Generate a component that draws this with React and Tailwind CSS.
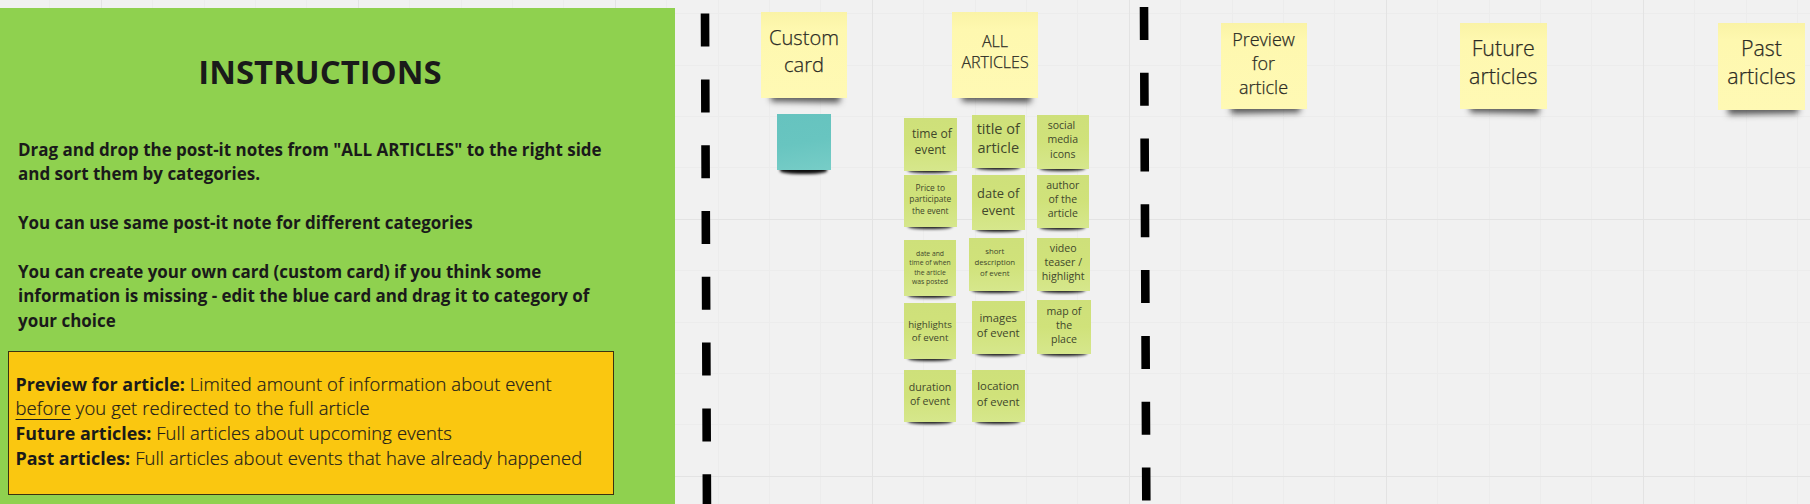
const NOTES = [
  { kind: "yellow", tilt: "right", box: "left-[761px] top-[12px] w-[86px] h-[86px]", type: "text-[20.1px] leading-[26.8px] pt-[13.3px]", lines: ["Custom", "card"] },
  { kind: "yellow", tilt: "right", box: "left-[952px] top-[12px] w-[86px] h-[86px]", type: "text-[16px] leading-[21.4px] pt-[18.7px]", lines: ["ALL", "ARTICLES"] },
  { kind: "yellow", tilt: "left", box: "left-[1220.5px] top-[22.5px] w-[86px] h-[86.5px]", type: "text-[18px] leading-[24px] pt-[4.2px]", lines: ["Preview", "for", "article"] },
  { kind: "yellow", tilt: "right", box: "left-[1460px] top-[22.5px] w-[86.5px] h-[86.5px]", type: "text-[21.4px] leading-[28px] pt-[11.4px]", lines: ["Future", "articles"] },
  { kind: "yellow", tilt: "left", box: "left-[1718px] top-[22.5px] w-[87px] h-[87px]", type: "text-[21.4px] leading-[28px] pt-[11.4px]", lines: ["Past", "articles"] },
  { kind: "teal", box: "left-[777px] top-[113.5px] w-[54px] h-[56px]", type: "", lines: [] },
  { kind: "green", box: "left-[904px] top-[117.5px] w-[52.5px] h-[53px]", type: "text-[12.1px] leading-[16.6px] pt-[8.2px]", lines: ["\u00a0time of", "event"] },
  { kind: "green", box: "left-[972px] top-[115px] w-[52.5px] h-[52.5px]", type: "text-[14.5px] leading-[19.4px] pt-[3.8px]", lines: ["title of", "article"] },
  { kind: "green", box: "left-[1036.5px] top-[114.5px] w-[52.5px] h-[54px]", type: "text-[10.5px] leading-[14.3px] pt-[3.6px]", lines: ["social\u00a0", "media", "icons"] },
  { kind: "green", box: "left-[904px] top-[175px] w-[52.5px] h-[52px]", type: "text-[8.4px] leading-[11.35px] pt-[7px]", lines: ["Price to", "participate", "the event"] },
  { kind: "green", box: "left-[972px] top-[174.5px] w-[52.5px] h-[55.5px]", type: "text-[12.9px] leading-[17.5px] pt-[10px]", lines: ["date of", "event"] },
  { kind: "green", box: "left-[1036.5px] top-[175px] w-[52.5px] h-[52.5px]", type: "text-[10.5px] leading-[14.2px] pt-[3px]", lines: ["author", "of the", "article"] },
  { kind: "green", box: "left-[904px] top-[239.5px] w-[52px] h-[56.5px]", type: "text-[6.8px] leading-[9.2px] pt-[9.6px]", lines: ["date and", "time of when", "the article", "was posted"] },
  { kind: "green", box: "left-[968.5px] top-[238px] w-[55.5px] h-[53px]", type: "text-[7.8px] leading-[10.6px] pt-[8.4px] pr-[3px]", lines: ["short", "description", "of event"] },
  { kind: "green", box: "left-[1037px] top-[238px] w-[52.5px] h-[53px]", type: "text-[10.6px] leading-[14.3px] pt-[2.8px]", lines: ["video", "teaser /", "highlight"] },
  { kind: "green", box: "left-[904px] top-[303px] w-[52px] h-[56px]", type: "text-[9.7px] leading-[13.3px] pt-[14.7px]", lines: ["highlights", "of event"] },
  { kind: "green", box: "left-[972px] top-[301px] w-[52.5px] h-[53px]", type: "text-[11.3px] leading-[15.4px] pt-[9px]", lines: ["images", "of event"] },
  { kind: "green", box: "left-[1037px] top-[300px] w-[54px] h-[54px]", type: "text-[10.6px] leading-[14.3px] pt-[3.8px]", lines: ["map of", "the", "place"] },
  { kind: "green", box: "left-[904px] top-[369.5px] w-[52px] h-[52.5px]", type: "text-[10.6px] leading-[14.3px] pt-[10.3px]", lines: ["duration", "of event"] },
  { kind: "green", box: "left-[972px] top-[370px] w-[52.5px] h-[52px]", type: "text-[11.3px] leading-[15.6px] pt-[8px]", lines: ["location", "of event"] },
];

const PAPER = {
  yellow: "bg-linear-to-b from-[#faf3a6] via-[#fef8af] via-20% to-[#fff9b4] text-[#2b2b24] font-light [-webkit-text-stroke:0.25px]",
  green: "bg-linear-to-b from-[#cee07a] via-[#d0e27a] via-50% to-[#d6e78c] text-[#41472c] font-normal",
  teal: "bg-linear-170 from-[#66c3bf] via-[#68c5c0] via-50% to-[#77cdc7]",
};

const SHADOW = {
  yellow: "left-[12%] right-[8%] -bottom-[4px] h-[10px] bg-black/65 blur-[3px]",
  green: "left-[7%] right-[8%] -bottom-[2.2px] h-[7px] bg-black/90 blur-[1.6px]",
  teal: "left-[6%] right-[8%] -bottom-[4px] h-[8px] bg-black/95 blur-[1.8px]",
};

const TILT = { left: "-rotate-1", right: "rotate-1" };

function Note({ kind, tilt, box, type, lines }) {
  return (
    <div className={`absolute ${box}`}>
      <div className={`absolute ${SHADOW[kind]} ${TILT[tilt] ?? "rounded-b-[40%]"}`} />
      <div className={`relative h-full text-center whitespace-nowrap ${PAPER[kind]} ${type}`}>
        {lines.map((line) => (
          <div key={line}>{line}</div>
        ))}
      </div>
    </div>
  );
}

const range = (start, step, end) => {
  const out = [];
  for (let v = start; v < end; v += step) out.push(v);
  return out;
};

function Board() {
  return (
    <svg className="absolute inset-0" width="1810" height="504" viewBox="0 0 1810 504">
      <g stroke="#ececec">
        {range(49.9, 51.4, 1810).map((x) => <path key={x} d={`M${Math.floor(x) + 0.5} 0V504`} />)}
        {range(13.7, 51.4, 504).map((y) => <path key={y} d={`M0 ${Math.floor(y) + 0.5}H1810`} />)}
      </g>
      <g stroke="#e3e3e3">
        {range(101.3, 257, 1810).map((x) => <path key={x} d={`M${Math.floor(x) + 0.5} 0V504`} />)}
        {range(219.3, 257, 504).map((y) => <path key={y} d={`M0 ${Math.floor(y) + 0.5}H1810`} />)}
      </g>
      <g stroke="#000" strokeWidth="8.6" strokeDasharray="33 32.8">
        <path d="M705 13.6L707 520" />
        <path d="M1144 6.9L1146.4 520" />
      </g>
    </svg>
  );
}

function Instructions() {
  return (
    <section className="absolute left-0 top-[8px] flex h-[496px] w-[675px] flex-col bg-[#8fd14f] text-[#1a1a1a]">
      <div className="ml-[18px] w-[604px]">
        <h1 className="pt-[41px] text-center text-[32.9px] leading-[46px] font-bold">INSTRUCTIONS</h1>
        <div className="mt-[43px] flex flex-col gap-[24.3px] text-[16.98px] leading-[24.4px] font-bold">
          <p>
            Drag and drop the post-it notes from "ALL ARTICLES" to the right side
            <br />
            and sort them by categories.
          </p>
          <p>You can use same post-it note for different categories</p>
          <p>
            You can create your own card (custom card) if you think some
            <br />
            information is missing - edit the blue card and drag it to category of
            <br />
            your choice
          </p>
        </div>
      </div>
      <div className="absolute top-[343px] left-[8px] h-[144px] w-[606px] border border-[#3b3210] bg-[#fac710] pt-[19.8px] pl-[6.5px] text-[18.4px] leading-[24.6px] font-light tracking-[0.13px] whitespace-nowrap [-webkit-text-stroke:0.2px]">
        <p>
          <b className="text-[17.9px] font-bold tracking-normal [-webkit-text-stroke:0px]">Preview for article:</b> Limited amount of information about event
        </p>
        <p>
          <span className="underline decoration-[1.4px] underline-offset-[4px]">before</span> you get redirected to the full article
        </p>
        <p>
          <b className="text-[17.9px] font-bold tracking-normal [-webkit-text-stroke:0px]">Future articles:</b> Full articles about upcoming events
        </p>
        <p>
          <b className="text-[17.9px] font-bold tracking-normal [-webkit-text-stroke:0px]">Past articles:</b> Full articles about events that have already happened
        </p>
      </div>
    </section>
  );
}

export default function App() {
  return (
    <main className="relative h-[504px] w-[1810px] overflow-hidden bg-[#f1f1f1] font-['Open_Sans','Noto_Sans',sans-serif]">
      <Board />
      <Instructions />
      {NOTES.map((note) => (
        <Note key={note.box} {...note} />
      ))}
    </main>
  );
}
